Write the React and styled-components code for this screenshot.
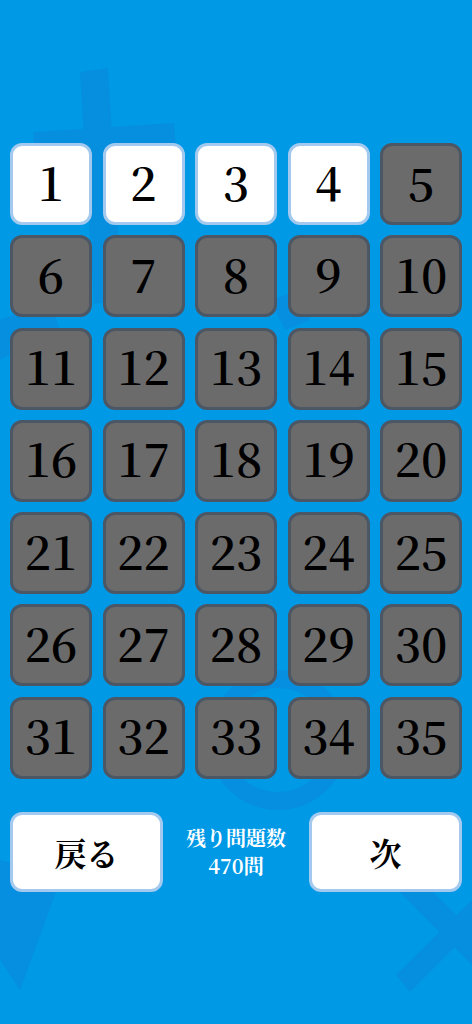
import React from "react";
import styled, { createGlobalStyle } from "styled-components";

const GlobalStyle = createGlobalStyle`
  html, body {
    margin: 0;
    padding: 0;
    background: #0099e6;
  }
  * {
    box-sizing: border-box;
  }
`;

const mincho = `"Noto Serif CJK JP", "Liberation Serif", "Noto Sans CJK JP", serif`;

const PageSC = styled.div`
  position: relative;
  width: 472px;
  min-height: 1024px;
  overflow: hidden;
  background: #0099e6;
  padding: 143px 10px 0;
`;

const BackdropSC = styled.svg`
  position: absolute;
  left: 0;
  top: 0;
  width: 472px;
  height: 1024px;
  z-index: 0;
  pointer-events: none;
`;

const ContentSC = styled.div`
  position: relative;
  z-index: 1;
`;

const GridSC = styled.div`
  display: grid;
  grid-template-columns: repeat(5, 1fr);
  column-gap: 10.5px;
  row-gap: 10.3px;
`;

const TileSC = styled.button`
  height: 82px;
  padding: 0 0 7px;
  display: flex;
  align-items: center;
  justify-content: center;
  border-radius: 12px;
  border: 3px solid ${props => (props.done ? "#a3caee" : "#4b5765")};
  background: ${props => (props.done ? "#ffffff" : "#6b6b6b")};
  color: #000;
  font-family: ${mincho};
  font-weight: 600;
  font-size: 46px;
  line-height: 1;
  cursor: pointer;
`;

const FooterSC = styled.div`
  margin-top: 33px;
  display: flex;
  align-items: center;
  justify-content: space-between;
`;

const NavButtonSC = styled.button`
  width: 153px;
  height: 80px;
  padding: 0;
  border-radius: 12px;
  border: 3px solid #a3caee;
  background: #ffffff;
  color: #000;
  font-family: ${mincho};
  font-weight: bold;
  font-size: 32px;
  line-height: 1;
  cursor: pointer;
`;

const RemainSC = styled.div`
  color: #ffffff;
  font-family: ${mincho};
  font-weight: bold;
  font-size: 20px;
  line-height: 28px;
  text-align: center;
`;

const Backdrop = () => (
  <BackdropSC viewBox="0 0 472 1024">
    <g fill="#0a89dc" opacity="0.6">
      <polygon points="80,72 108,68 122,300 94,304" />
      <polygon points="33,132 174,123 176,150 35,160" />
      <polygon points="0,320 50,300 60,330 0,360" />
      <polygon points="0,860 62,876 20,990 0,960" />
      <polygon points="380,872 400,860 472,930 472,965" />
      <polygon points="472,900 472,930 410,992 396,975" />
      <polygon points="270,300 300,290 310,320 285,330" />
    </g>
    <circle cx="278" cy="740" r="61" fill="none" stroke="#0a89dc" strokeOpacity="0.6" strokeWidth="18" />
  </BackdropSC>
);

const App = () => {
  const tiles = Array.from({ length: 35 }, (_, i) => i + 1);

  return (
    <>
      <GlobalStyle />
      <PageSC>
        <Backdrop />
        <ContentSC>
          <GridSC>
            {tiles.map(n => (
              <TileSC key={n} done={n <= 4}>
                {n}
              </TileSC>
            ))}
          </GridSC>
          <FooterSC>
            <NavButtonSC>戻る</NavButtonSC>
            <RemainSC>
              残り問題数
              <br />
              470問
            </RemainSC>
            <NavButtonSC>次</NavButtonSC>
          </FooterSC>
        </ContentSC>
      </PageSC>
    </>
  );
};

export default App;
